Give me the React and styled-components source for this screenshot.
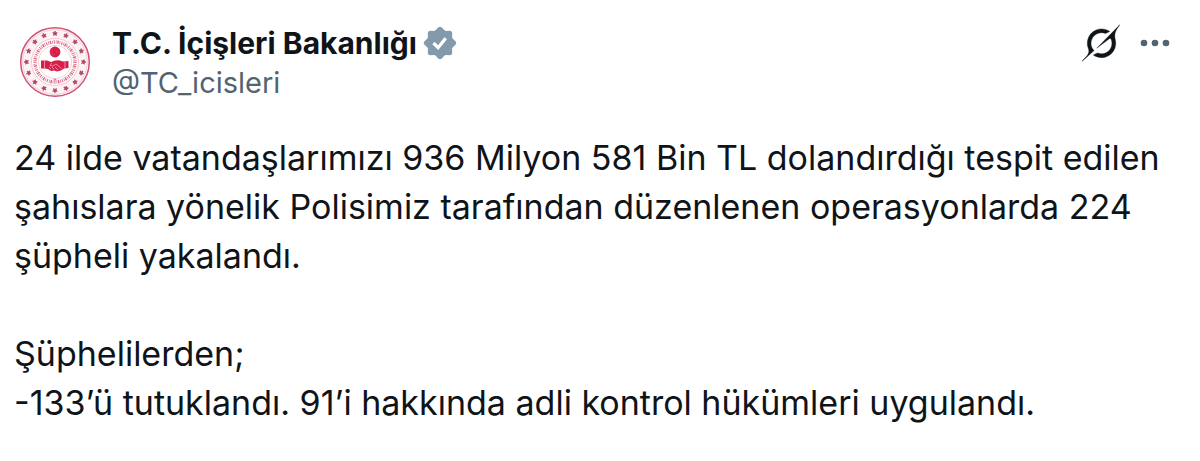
import React from 'react';
import styled, { createGlobalStyle } from 'styled-components';

const GlobalStyle = createGlobalStyle`
    body {
        margin: 0;
        background-color: #fff;
    }
`;

// Styled Components
const Post = styled.article`
    padding: 20px 26px 20px 14px;
    font-family: Inter, Roboto, 'Liberation Sans', sans-serif;
    color: #0f1419;
`;

const Header = styled.header`
    display: flex;
    align-items: flex-start;
`;

const AvatarLink = styled.a`
    display: flex;
    padding: 6px 5px;
    margin-right: 16px;
`;

const Author = styled.div`
    flex: 1;
    min-width: 0;
    padding-top: 3px;
`;

const NameRow = styled.div`
    display: flex;
    align-items: center;
    gap: 4px;
`;

const AuthorLink = styled.a`
    display: block;
    text-decoration: none;
    white-space: nowrap;
    font-size: ${({ $strong }) => ($strong ? '30px' : '29px')};
    line-height: 40px;
    font-weight: ${({ $strong }) => ($strong ? 700 : 400)};
    color: ${({ $strong }) => ($strong ? '#0f1419' : '#536471')};
`;

const Actions = styled.div`
    display: flex;
    align-items: center;
    gap: 16px;
    padding-top: 4px;
`;

const IconButton = styled.button`
    display: flex;
    padding: 0;
    border: 0;
    background: none;
    color: ${({ $muted }) => ($muted ? '#536471' : '#0f1419')};
    cursor: pointer;
`;

const Body = styled.div`
    margin-top: 29px;
    margin-right: -10px;
`;

const Paragraph = styled.p`
    margin: 0 0 49px;
    font-size: 34px;
    line-height: 49px;

    &:last-child {
        margin-bottom: 0;
    }
`;

const STAR = 'M0 -3L0.8 -1L2.9 -0.9L1.3 0.4L1.8 2.4L0 1.3L-1.8 2.4L-1.3 0.4L-2.9 -0.9L-0.8 -1Z';

const MinistryLogo = () => (
    <svg width="72" height="72" viewBox="-36 -36 72 72" aria-hidden="true">
        <circle r="34.3" fill="#fdf3f5" stroke="#cf5272" strokeWidth="1.5" />
        <circle r="32.3" fill="none" stroke="#edb3c1" strokeWidth="0.6" />
        {Array.from({ length: 16 }, (_, i) => (
            <path
                key={i}
                d={STAR}
                fill="#ad4260"
                stroke="#ad4260"
                strokeWidth="1"
                transform={`rotate(${i * 22.5}) translate(0 -28.5) scale(0.8)`}
            />
        ))}
        <circle r="23.5" fill="#fff" stroke="#f0b9c6" strokeWidth="0.8" />
        {/* lettering band */}
        <circle
            r="20"
            fill="none"
            stroke="#d9647f"
            strokeWidth="3.4"
            strokeDasharray="1 1.1 0.7 0.9 1.4 0.8 0.6 1.2"
        />
        <circle r="16.5" fill="#fff" stroke="#f0b9c6" strokeWidth="0.7" />
        <circle cy="-10" r="5.4" fill="#d81e48" />
        <path d="M-2 -11.5a2.2 2.2 0 1 0 2 3.4M1 -11l1.6 1.4" fill="none" stroke="#e4526f" strokeWidth="0.6" />
        {/* handshake */}
        <path
            d="M-14 -1.5L-8 -1.5L-4 0L0 -1.5L4 -1.8L8 -0.5L13.5 -1L13.5 6L9 6.5L6 8.5L2 9.5L-1 8.5L-4 9L-7 7L-10 6.5L-14 6.5Z"
            fill="#d81e48"
        />
        <path
            d="M-10.5 -1.5V6M10 -0.5V6M-3 1L-5 3.5L-2 4L1 2L6.5 6.5M-6 5L-4 7M-3 5L-1 7.5M0 5L3 8"
            fill="none"
            stroke="#f7bdca"
            strokeWidth="0.7"
        />
        <path d="M-1.5 17.5H1.5M0 16V19" stroke="#e06b86" strokeWidth="0.7" />
    </svg>
);

const VerifiedBadge = () => (
    <svg width="38" height="38" viewBox="0 0 22 22" role="img" aria-label="Onaylanmış hesap">
        <path
            d="M12.05 2.056c-.568-.608-1.532-.608-2.1 0l-1.393 1.49c-.284.303-.685.47-1.1.455L5.42 3.932c-.832-.028-1.514.654-1.486 1.486l.069 2.039c.014.415-.152.816-.456 1.1l-1.49 1.392c-.608.568-.608 1.533 0 2.101l1.49 1.393c.304.284.47.684.456 1.1l-.07 2.038c-.027.832.655 1.514 1.487 1.486l2.038-.069c.415-.014.816.152 1.1.455l1.392 1.49c.569.609 1.533.609 2.102 0l1.393-1.49c.283-.303.684-.47 1.099-.455l2.038.069c.832.028 1.515-.654 1.486-1.486L18 14.542c-.015-.415.152-.815.455-1.099l1.49-1.393c.608-.568.608-1.533 0-2.101l-1.49-1.393c-.303-.283-.47-.684-.455-1.1l.068-2.038c.029-.832-.654-1.514-1.486-1.486l-2.038.07c-.415.013-.816-.153-1.1-.456z"
            fill="#829aab"
        />
        <path d="M7.2 11L9.9 13.7L14.3 8.2" fill="none" stroke="#fff" strokeWidth="1.9" />
    </svg>
);

const GrokIcon = () => (
    <svg width="38" height="38" viewBox="0 0 33 32" fill="currentColor" aria-hidden="true">
        <path
            stroke="currentColor"
            strokeWidth="0.3"
            d="M12.745 20.54l10.97-8.19c.539-.4 1.307-.244 1.564.38 1.349 3.288.746 7.241-1.938 9.955-2.683 2.714-6.417 3.31-9.83 1.954l-3.728 1.745c5.347 3.697 11.84 2.782 15.898-1.324 3.219-3.255 4.216-7.692 3.284-11.693l.008.009c-1.351-5.878.332-8.227 3.782-13.031L33 0l-4.54 4.59v-.014L12.743 20.544m-2.263 1.987c-3.837-3.707-3.175-9.446.1-12.755 2.42-2.449 6.388-3.448 9.852-1.979l3.72-1.737c-.67-.49-1.53-1.017-2.515-1.387-4.455-1.854-9.789-.931-13.41 2.728-3.483 3.523-4.579 8.94-2.697 13.561 1.405 3.454-.899 5.898-3.22 8.364C1.49 30.2.666 31.074 0 32l10.478-9.466"
        />
    </svg>
);

const MoreIcon = () => (
    <svg width="38" height="38" viewBox="0 0 38 38" fill="currentColor" aria-hidden="true">
        <circle cx="8" cy="19" r="3.3" />
        <circle cx="19" cy="19" r="3.3" />
        <circle cx="30" cy="19" r="3.3" />
    </svg>
);

const paragraphs = [
    '24 ilde vatandaşlarımızı 936 Milyon 581 Bin TL dolandırdığı tespit edilen şahıslara yönelik Polisimiz tarafından düzenlenen operasyonlarda 224 şüpheli yakalandı.',
    <>
        Şüphelilerden;
        <br />
        -133’ü tutuklandı. 91’i hakkında adli kontrol hükümleri uygulandı.
    </>,
];

// Main Component
const App = () => {
    return (
        <>
            <GlobalStyle />
            <Post lang="tr">
                <Header>
                    <AvatarLink href="#profil" aria-label="T.C. İçişleri Bakanlığı profili">
                        <MinistryLogo />
                    </AvatarLink>
                    <Author>
                        <NameRow>
                            <AuthorLink href="#profil" $strong>T.C. İçişleri Bakanlığı</AuthorLink>
                            <VerifiedBadge />
                        </NameRow>
                        <AuthorLink href="#profil">@TC_icisleri</AuthorLink>
                    </Author>
                    <Actions>
                        <IconButton type="button" aria-label="Grok">
                            <GrokIcon />
                        </IconButton>
                        <IconButton type="button" aria-label="Daha fazla" $muted>
                            <MoreIcon />
                        </IconButton>
                    </Actions>
                </Header>
                <Body>
                    {paragraphs.map((text, index) => (
                        <Paragraph key={index}>{text}</Paragraph>
                    ))}
                </Body>
            </Post>
        </>
    );
};

export default App;
